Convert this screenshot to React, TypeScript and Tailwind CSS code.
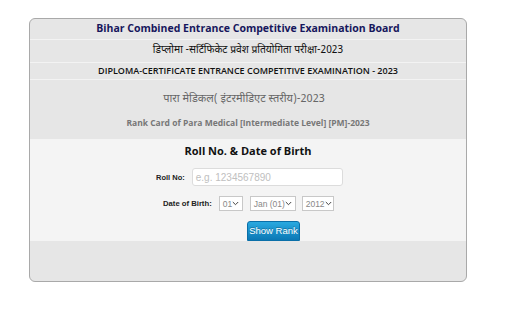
const hindi = '"Noto Sans Devanagari", "Lohit Devanagari", "Noto Sans", "Open Sans", sans-serif';

function Select({ value, width }: { value: string; width: string }) {
  return (
    <div
      className={`flex items-center justify-between h-[15px] ${width} border border-[#c8c8c8] bg-white pl-[3px] pr-[3px] text-[8.5px] leading-none whitespace-nowrap text-[#888] font-['Liberation_Sans',sans-serif]`}
    >
      <span>{value}</span>
      <svg width="7" height="5" viewBox="0 0 7 5" className="shrink-0">
        <path d="M0.8 1 L3.5 3.7 L6.2 1" fill="none" stroke="#444" strokeWidth="1" />
      </svg>
    </div>
  );
}

export default function App() {
  return (
    <div className="w-[512px] h-[318px] bg-white pt-[18px] pl-[29px]">
      <div className="w-[438px] h-[264px] border border-[#a9a9a9] rounded-[6px] bg-[#e6e6e6] overflow-hidden flex flex-col font-['Open_Sans',sans-serif]">
        {/* Board name */}
        <div className="h-[21px] shrink-0 border-b border-[#f3f3f3] flex items-center justify-center text-[10.5px] font-bold text-[#16165c] whitespace-nowrap">
          Bihar Combined Entrance Competitive Examination Board
        </div>
        <div
          className="h-[23px] shrink-0 border-b border-[#f3f3f3] flex items-center justify-center text-[10.3px] text-[#111] whitespace-nowrap"
          style={{ fontFamily: hindi }}
        >
          डिप्लोमा -सर्टिफिकेट प्रवेश प्रतियोगिता परीक्षा-2023
        </div>
        <div className="h-[17px] shrink-0 border-b border-[#f3f3f3] flex items-center justify-center text-[9px] font-semibold text-[#111] whitespace-nowrap">
          DIPLOMA-CERTIFICATE ENTRANCE COMPETITIVE EXAMINATION - 2023
        </div>
        <div className="h-[59px] shrink-0 flex flex-col items-center pt-[10px]">
          <div className="h-[18px] pr-[8px] flex items-center text-[11px] text-[#666] whitespace-nowrap" style={{ fontFamily: hindi }}>
            पारा मेडिकल( इंटरमीडिएट स्तरीय)-2023
          </div>
          <div className="h-[18px] mt-[6px] flex items-center text-[8.5px] font-bold text-[#777] whitespace-nowrap">
            Rank Card of Para Medical [Intermediate Level] [PM]-2023
          </div>
        </div>

        {/* Form */}
        <div className="h-[102px] shrink-0 bg-[#f4f4f4] flex flex-col">
          <div className="self-center mt-[3px] h-[20px] flex items-center text-[11px] font-bold text-[#111] whitespace-nowrap">
            Roll No. &amp; Date of Birth
          </div>
          <div className="mt-[7px] ml-[126px] flex items-center gap-[7px]">
            <span className="text-[7.5px] font-bold text-[#222] font-['Liberation_Sans',sans-serif] whitespace-nowrap">Roll No:</span>
            <div className="w-[151px] h-[18px] border border-[#dcdcdc] rounded-[3px] bg-white flex items-center pl-[3px] text-[10px] text-[#c0c0c0] font-['Liberation_Sans',sans-serif] whitespace-nowrap">
              e.g. 1234567890
            </div>
          </div>
          <div className="mt-[10px] ml-[133px] flex items-center">
            <span className="text-[7.7px] font-bold text-[#222] font-['Liberation_Sans',sans-serif] mr-[7px] whitespace-nowrap">Date of Birth:</span>
            <Select value="01" width="w-[24px]" />
            <div className="w-[7px]" />
            <Select value="Jan (01)" width="w-[46px]" />
            <div className="w-[6px]" />
            <Select value="2012" width="w-[32px]" />
          </div>
          <button className="self-start mt-[10px] ml-[217px] w-[53px] h-[20px] rounded-t-[3px] bg-gradient-to-b from-[#29a9e0] to-[#0b78b5] border border-[#0a6fa8] text-white text-[9.5px] font-['Liberation_Sans',sans-serif] whitespace-nowrap [text-shadow:0_-1px_0_rgba(0,0,0,0.25)]">
            Show Rank
          </button>
        </div>
        <div className="flex-1" />
      </div>
    </div>
  );
}
